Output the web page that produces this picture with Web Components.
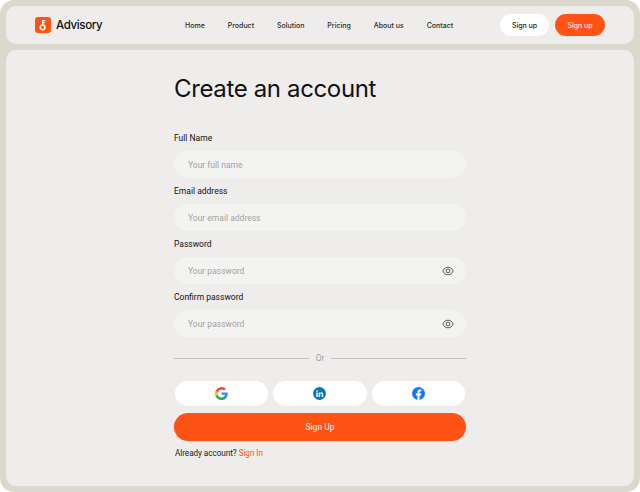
<!DOCTYPE html>
<html lang="en"><head><meta charset="utf-8"><title>Advisory</title>
<style>
html,body{margin:0;padding:0;background:#fff;}
body{width:640px;height:492px;overflow:hidden;font-family:"Inter","Liberation Sans",sans-serif;}
</style></head>
<body>
<app-frame>
  <site-nav></site-nav>
  <signup-form></signup-form>
</app-frame>
<script>
class AppFrame extends HTMLElement{constructor(){super();this.attachShadow({mode:'open'}).innerHTML=`<style>
:host{display:flex;flex-direction:column;gap:6px;box-sizing:border-box;width:640px;height:492px;padding:6px;background:#dbd9cd;border-radius:14px;}
</style><slot></slot>`;}}
class SiteNav extends HTMLElement{constructor(){super();this.attachShadow({mode:'open'}).innerHTML=`<style>
:host{display:flex;align-items:center;box-sizing:border-box;height:38px;flex:none;background:#eeedeb;border-radius:10px;padding:0 29px;}
.brand{display:flex;align-items:center;gap:5px;font:500 11.5px "Inter",sans-serif;color:#111;letter-spacing:-.35px;width:150px;}
.logo{width:16px;height:16px;flex:none;display:block;}
nav{display:flex;gap:23px;font:500 7px "Inter",sans-serif;color:#2a2a2a;}
.act{margin-left:auto;display:flex;gap:6px;}
.b{display:flex;align-items:center;justify-content:center;height:22px;width:49px;border-radius:11px;background:#fff;font:500 7px "Inter",sans-serif;color:#222;}
.b.o{background:#ff5316;color:#fff;width:50px;font-weight:400;}
</style>
<div class="brand"><svg class="logo" viewBox="0 0 16 16"><rect width="16" height="16" rx="3" fill="#ff5316"/><circle cx="7.6" cy="10.3" r="2.4" fill="none" stroke="#fff" stroke-width="1.5"/><path d="M7.6 8V3M7.6 3.6h2.6M7.6 5.7h2" stroke="#fff" stroke-width="1.3" fill="none"/></svg><span>Advisory</span></div>
<nav><span>Home</span><span>Product</span><span>Solution</span><span>Pricing</span><span>About us</span><span>Contact</span></nav>
<div class="act"><span class="b">Sign up</span><span class="b o">Sign up</span></div>`;}}
class FormField extends HTMLElement{constructor(){super();const eye=this.hasAttribute('eye');this.attachShadow({mode:'open'}).innerHTML=`<style>
:host{display:flex;flex-direction:column;gap:7px;}
label{font:400 8.5px/11px "Roboto",sans-serif;color:#111;}
.i{display:flex;align-items:center;justify-content:space-between;box-sizing:border-box;height:27px;border-radius:14px;background:#f3f3f1;padding:0 12px 0 14px;font:400 8.5px "Roboto",sans-serif;color:#a3a3a1;}
svg{width:12px;height:12px;display:block;}
</style><label>${this.getAttribute('label')}</label><div class="i"><span>${this.getAttribute('ph')}</span>${eye?'<svg viewBox="0 0 12 12" fill="none" stroke="#444" stroke-width=".9"><path d="M.8 6C2 3.4 3.8 2.2 6 2.2S10 3.4 11.2 6C10 8.6 8.2 9.8 6 9.8S2 8.6.8 6Z"/><circle cx="6" cy="6" r="1.9"/></svg>':''}</div>`;}}
class SocialButton extends HTMLElement{constructor(){super();this.attachShadow({mode:'open'}).innerHTML=`<style>
:host{flex:1;display:flex;align-items:center;justify-content:center;height:25px;border-radius:12.5px;background:#fff;}
</style><slot></slot>`;}}
class SignupForm extends HTMLElement{constructor(){super();this.attachShadow({mode:'open'}).innerHTML=`<style>
:host{display:flex;flex-direction:column;flex:1;box-sizing:border-box;background:#eeedeb;border-radius:10px;padding:23px 168px 0;}
h1{margin:0 0 28px;font:400 24px/32px "Inter",sans-serif;color:#111;letter-spacing:-.36px;}
.fields{display:flex;flex-direction:column;gap:8px;}
.or{display:flex;align-items:center;gap:7px;margin-top:16px;font:400 8.5px/11px "Roboto",sans-serif;color:#a3a3a1;}
.or i{flex:1;height:1px;background:#c2c2bf;}
.soc{display:flex;gap:5px;margin-top:17px;padding:0 1px;}
.soc svg{width:13px;height:13px;display:block;}
.go{display:flex;align-items:center;justify-content:center;height:28px;margin-top:7px;border-radius:14px;background:#ff5316;color:#fff;font:400 8.5px "Roboto",sans-serif;}
.al{margin:7px 0 0 1px;font:400 8.2px/11px "Roboto",sans-serif;color:#222;letter-spacing:-.06px;}
.al b{font-weight:400;color:#ff5316;}
</style>
<h1>Create an account</h1>
<div class="fields">
<form-field label="Full Name" ph="Your full name"></form-field>
<form-field label="Email address" ph="Your email address"></form-field>
<form-field label="Password" ph="Your password" eye></form-field>
<form-field label="Confirm password" ph="Your password" eye></form-field>
</div>
<div class="or"><i></i><span>Or</span><i></i></div>
<div class="soc">
<social-button><svg viewBox="0 0 24 24"><path fill="#4285F4" d="M23.5 12.3c0-.8-.1-1.6-.2-2.3H12v4.5h6.5a5.5 5.5 0 0 1-2.4 3.6v3h3.9c2.2-2.1 3.5-5.2 3.5-8.8z"/><path fill="#34A853" d="M12 24c3.2 0 6-1.1 8-2.9l-3.9-3c-1.1.7-2.5 1.2-4.1 1.2-3.1 0-5.8-2.1-6.7-5H1.3v3.1A12 12 0 0 0 12 24z"/><path fill="#FBBC05" d="M5.3 14.3a7.2 7.2 0 0 1 0-4.6V6.6h-4a12 12 0 0 0 0 10.8z"/><path fill="#EA4335" d="M12 4.8c1.8 0 3.3.6 4.6 1.8l3.4-3.4A12 12 0 0 0 1.3 6.6l4 3.1c.9-2.8 3.6-4.9 6.7-4.9z"/></svg></social-button>
<social-button><svg viewBox="0 0 24 24"><circle cx="12" cy="12" r="12" fill="#0a77b5"/><path fill="#fff" d="M6 10h2.7v8.5H6zM7.35 5.8a1.55 1.55 0 1 1 0 3.1 1.55 1.55 0 0 1 0-3.1zM10.4 10H13v1.2c.5-.8 1.4-1.4 2.7-1.4 2.4 0 3.1 1.5 3.1 3.9v4.8h-2.7v-4.3c0-1.2-.2-2.1-1.4-2.1s-1.6.9-1.6 2.1v4.3h-2.7z"/></svg></social-button>
<social-button><svg viewBox="0 0 24 24"><circle cx="12" cy="12" r="12" fill="#1877f2"/><path fill="#fff" d="M16.7 15.5l.5-3.5h-3.3V9.8c0-1 .5-1.9 2-1.9h1.5v-3s-1.4-.2-2.7-.2c-2.7 0-4.5 1.7-4.5 4.6V12h-3v3.5h3V24h3.7v-8.5z"/></svg></social-button>
</div>
<div class="go">Sign Up</div>
<div class="al">Already account? <b>Sign In</b></div>`;}}
customElements.define('app-frame',AppFrame);
customElements.define('site-nav',SiteNav);
customElements.define('form-field',FormField);
customElements.define('social-button',SocialButton);
customElements.define('signup-form',SignupForm);
</script>
</body></html>
